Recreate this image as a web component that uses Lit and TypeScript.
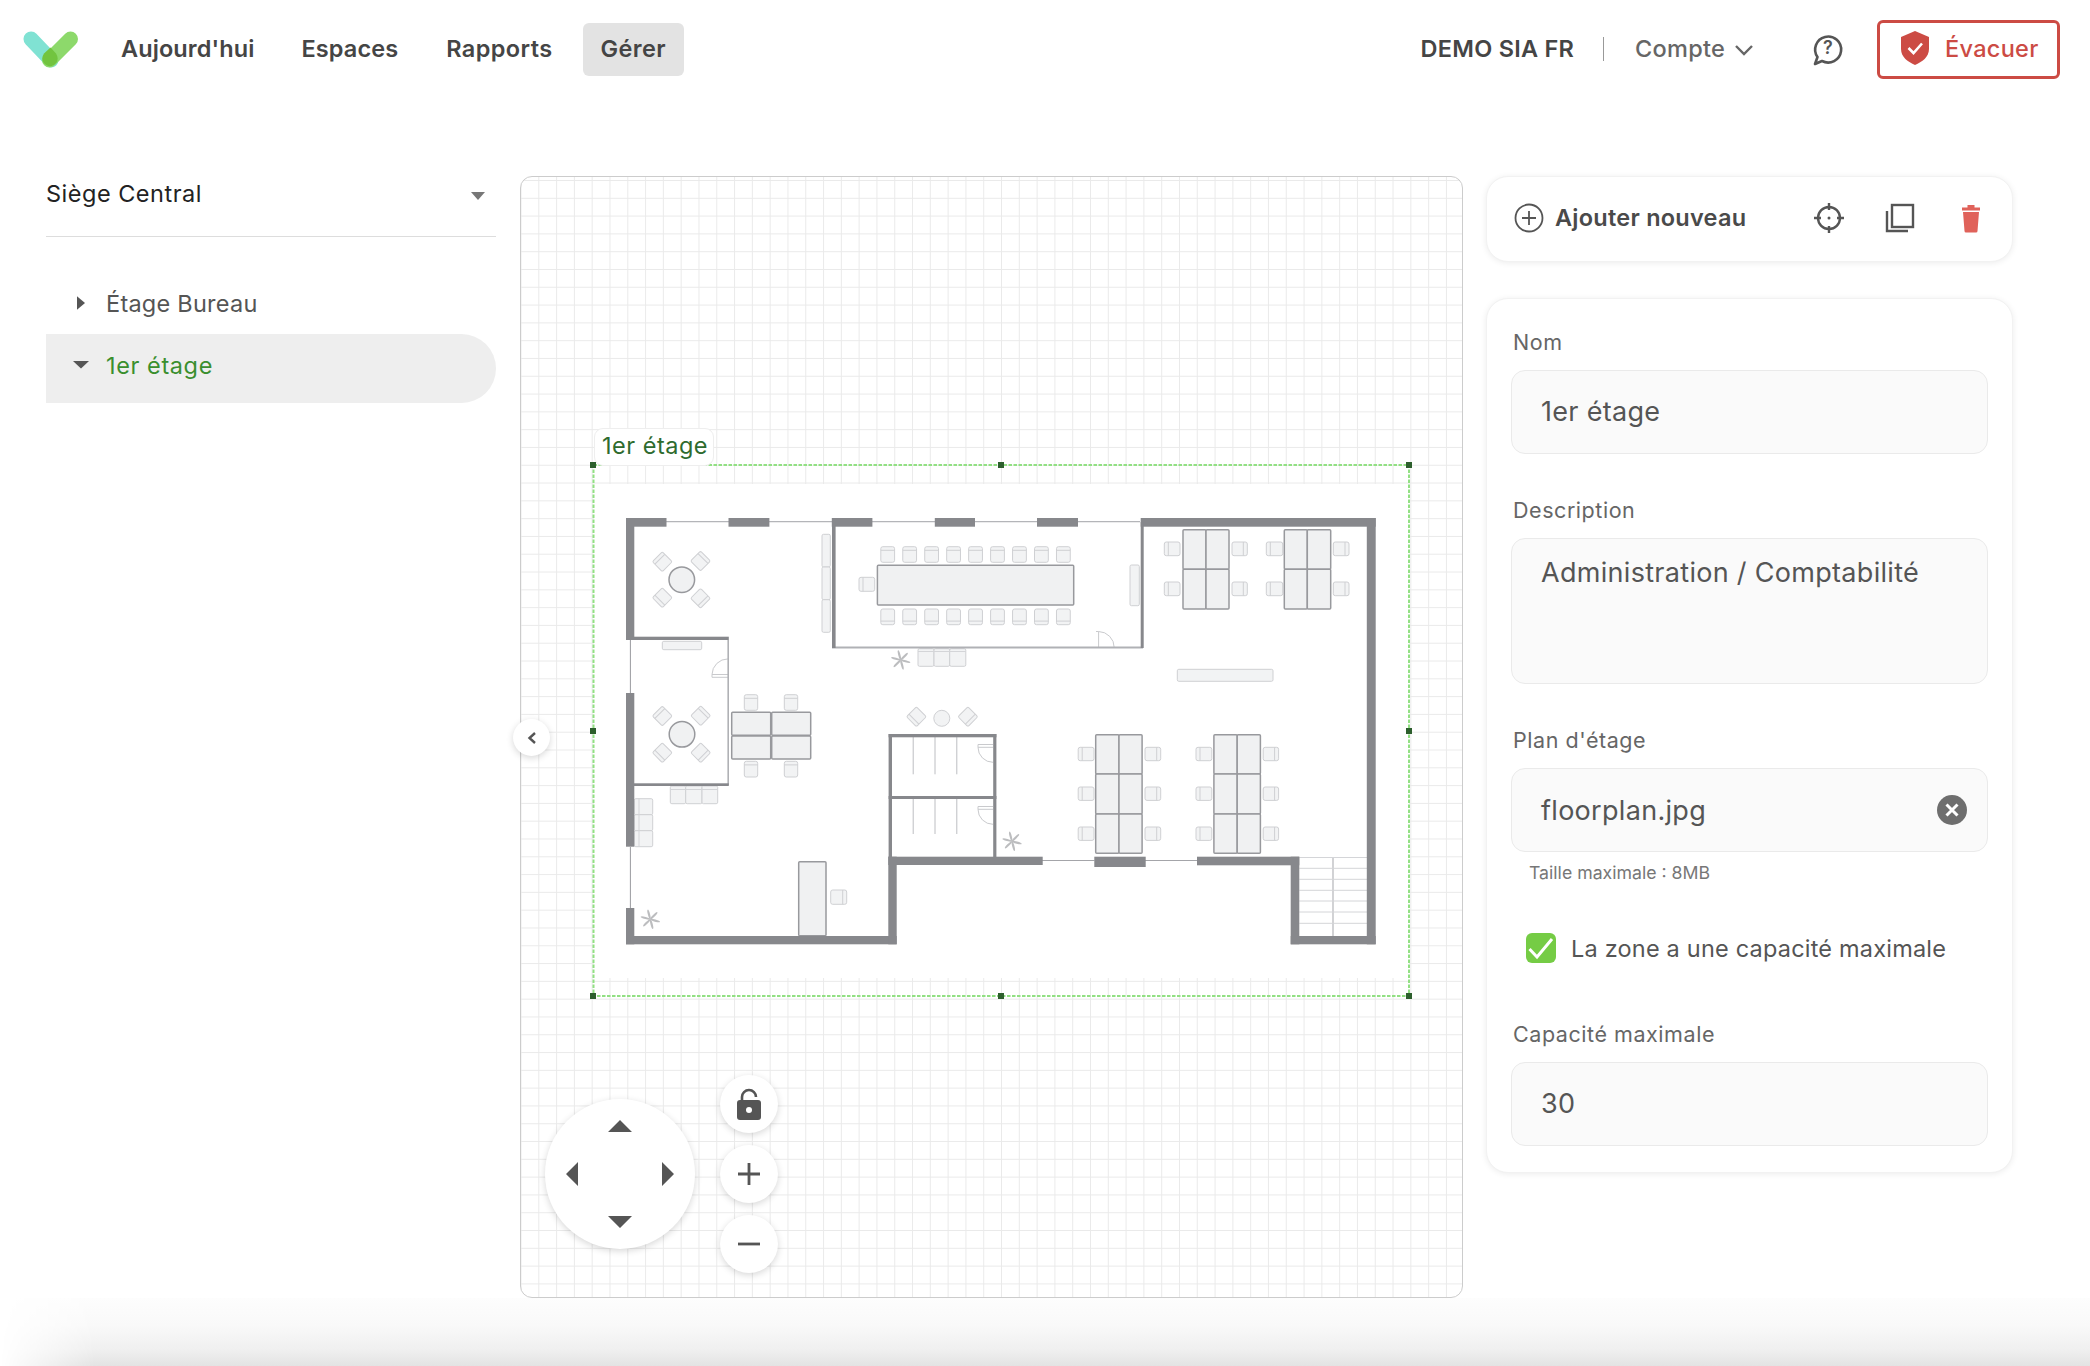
import { LitElement, html, svg, css } from "lit";
import { customElement } from "lit/decorators.js";

const WALL = "#87888c";

// wall rects given as x1, y1, x2, y2 in page pixels
const walls = [
  [626, 518, 666.5, 526.7], [728.5, 518, 769.4, 526.7], [831.8, 518, 872.4, 526.7],
  [934.8, 518, 975, 526.7], [1037, 518, 1078, 526.7], [1140.7, 518, 1375.7, 526.7],
  [1366.8, 518, 1375.7, 944.3], [626, 518, 634.3, 640], [626, 636.7, 728.8, 640],
  [832, 522, 835.6, 648], [1140.7, 522, 1143.7, 648], [626, 693, 634.3, 846.7],
  [634, 783.3, 728.8, 786], [626, 908, 634.3, 944.3], [626, 936, 896.7, 944.3],
  [888.3, 856.7, 896.7, 944.3], [888.3, 856.7, 1042.7, 865], [1094.3, 856.7, 1145.7, 867],
  [1197, 856.7, 1299.3, 865.3], [1290.7, 856.7, 1299.3, 944.3], [1290.7, 936, 1375.7, 944.3],
  [888.6, 734, 996.4, 737.3], [888.6, 734, 892, 857], [993.2, 734, 996.4, 857], [888.6, 796, 996.4, 799],
];

// thin lines: x1, y1, x2, y2, width, colour
const lines: [number, number, number, number, number, string][] = [
  [666, 521.7, 1140, 521.7, 1.3, "#b4b5b9"],
  [630.4, 640, 630.4, 693, 1, "#9a9b9f"],
  [630.4, 847, 630.4, 908, 1, "#9a9b9f"],
  [1042, 860.5, 1094.5, 860.5, 1, "#a4a5a9"],
  [1145, 860.5, 1197, 860.5, 1, "#a4a5a9"],
  [832, 647.6, 1143, 647.6, 2, "#b0b1b5"],
  [728.2, 640, 728.2, 785, 1.6, "#b0b1b5"],
  [913.2, 737, 913.2, 774.3, 1, "#bdbec2"], [935, 737, 935, 774.3, 1, "#bdbec2"], [956.8, 737, 956.8, 774.3, 1, "#bdbec2"],
  [913.2, 799, 913.2, 834, 1, "#bdbec2"], [935, 799, 935, 834, 1, "#bdbec2"], [956.8, 799, 956.8, 834, 1, "#bdbec2"],
  [1333, 857.5, 1333, 936, 1.2, "#b4b5b9"],
  ...[857.5, 868.3, 879.3, 890.3, 901, 912, 923.3].map(
    (y) => [1299.3, y, 1367, y, 1, "#d4d5d8"] as [number, number, number, number, number, string]
  ),
  // sofa backs
  [918, 651.5, 965.8, 651.5, 1, "#d4d5d8"],
  [670.3, 789.5, 717.7, 789.5, 1, "#d4d5d8"],
  [639, 798.7, 639, 846.7, 1, "#d4d5d8"],
];

// tables: x, y, w, h
const tables = [
  [877.4, 565.3, 196.3, 39.7], [731.7, 712.3, 39, 23], [771.7, 712.3, 39, 23], [731.7, 736, 39, 23], [771.7, 736, 39, 23],
  [1183, 529.7, 23, 39.6], [1206, 529.7, 23, 39.6], [1183, 569.3, 23, 39.7], [1206, 569.3, 23, 39.7],
  [1284.3, 529.7, 23, 39.6], [1307.3, 529.7, 23.4, 39.6], [1284.3, 569.3, 23, 39.7], [1307.3, 569.3, 23.4, 39.7],
  [1095.7, 734.7, 23.3, 39.3], [1119, 734.7, 23.1, 39.3], [1095.7, 774, 23.3, 40], [1119, 774, 23.1, 40], [1095.7, 814, 23.3, 39.3], [1119, 814, 23.1, 39.3],
  [1213.9, 734.7, 23.3, 39.3], [1237.2, 734.7, 23.2, 39.3], [1213.9, 774, 23.3, 40], [1237.2, 774, 23.2, 40], [1213.9, 814, 23.3, 39.3], [1237.2, 814, 23.2, 39.3],
  [798.7, 861.7, 27.3, 74],
];

// light furniture: x, y, w, h
const benches = [
  [1130, 565, 9.3, 40.7], [822, 534.3, 8.3, 32.7], [822, 567, 8.3, 32.7], [822, 599.7, 8.3, 32.6],
  [662.3, 641.3, 39.4, 8.4], [1177.3, 669.3, 95.7, 12],
  [918, 648.7, 16, 17.6], [934, 648.7, 15.7, 17.6], [949.7, 648.7, 16.1, 17.6],
  [670.3, 786, 15.4, 17.7], [685.7, 786, 16.3, 17.7], [702, 786, 15.7, 17.7],
  [634.3, 798.7, 18.4, 16], [634.3, 814.7, 18.4, 16], [634.3, 830.7, 18.4, 16],
];

type Side = "t" | "b" | "l" | "r";
const chairs: [number, number, number, number, Side][] = [];
for (let i = 0; i < 9; i++) {
  const x = 880.8 + i * 21.96;
  chairs.push([x, 546.7, 13.8, 15.6, "t"], [x, 609, 13.8, 15.7, "b"]);
}
chairs.push([859, 577.3, 15.7, 14, "l"], [830.7, 890, 16, 14.3, "r"]);
for (const x of [744.3, 784.3]) chairs.push([x, 694.7, 13.4, 15.6, "t"], [x, 761.3, 13.4, 15.7, "t"]);
for (const y of [542, 582]) {
  chairs.push([1164.3, y, 15.7, 13.7, "l"], [1232, y, 15.3, 13.7, "r"], [1266.3, y, 16.4, 13.7, "l"], [1333.3, y, 15.7, 13.7, "r"]);
}
for (const y of [747.3, 787, 827]) {
  chairs.push([1078.2, y, 15.8, 13.4, "l"], [1145, y, 15.7, 13.4, "r"], [1196, y, 15.8, 13.4, "l"], [1263.2, y, 15.4, 13.4, "r"]);
}

// diamond chairs: cx, cy, rotation of the back
const diamonds = [
  [662.3, 561.7, -135], [700.5, 561, -45], [662.3, 597.7, 135], [700.5, 598.3, 45],
  [662.3, 716, -135], [700.7, 715.7, -45], [662.3, 752.7, 135], [700.7, 752.7, 45],
  [916.4, 716.7, 135], [967.9, 716.7, 45],
];

const plants = [[900.7, 660], [650.3, 919.3], [1012, 841.3]];

const doors = [
  "M1096 631.5h2.6v16M1098.6 631.5a16 16 0 0 1 15.6 16",
  "M728 674.5h-16v2.8h16M712 674.5a16 16 0 0 1 16-15.6",
  "M993 744.5h-15v2.8h15M978 747.3a15 15 0 0 0 15 15",
  "M993 806.5h-15v2.8h15M978 809.3a15 15 0 0 0 15 15",
];

const handles = [
  [593, 465], [1001, 465], [1409, 465], [593, 731], [1409, 731], [593, 996], [1001, 996], [1409, 996],
];

function chairBand(x: number, y: number, w: number, h: number, side: Side) {
  if (side === "t") return svg`<line x1=${x} y1=${y + 3.6} x2=${x + w} y2=${y + 3.6} />`;
  if (side === "b") return svg`<line x1=${x} y1=${y + h - 3.6} x2=${x + w} y2=${y + h - 3.6} />`;
  if (side === "l") return svg`<line x1=${x + 4} y1=${y} x2=${x + 4} y2=${y + h} />`;
  return svg`<line x1=${x + w - 4} y1=${y} x2=${x + w - 4} y2=${y + h} />`;
}

function floorPlan() {
  return svg`
    <rect x="594" y="484" width="815" height="494" fill="#fff" />
    <g fill="#f2f3f4" stroke="#cfd0d3" stroke-width="1">
      ${benches.map(([x, y, w, h]) => svg`<rect x=${x} y=${y} width=${w} height=${h} rx="1.5" />`)}
      ${chairs.map(([x, y, w, h, s]) => svg`<rect x=${x} y=${y} width=${w} height=${h} rx="2" />${chairBand(x, y, w, h, s)}`)}
      ${diamonds.map(([cx, cy, r]) => svg`
        <g transform="translate(${cx} ${cy}) rotate(${r})">
          <rect x="-7" y="-7" width="14" height="14" rx="1.5" />
          <line x1="3.5" y1="-7" x2="3.5" y2="7" />
        </g>`)}
      <circle cx="941.8" cy="718.3" r="8" />
    </g>
    <g fill="#f0f1f2" stroke="#98999d" stroke-width="1.5">
      ${tables.map(([x, y, w, h]) => svg`<rect x=${x} y=${y} width=${w} height=${h} rx="1" />`)}
      <circle cx="681.8" cy="579.7" r="12.8" />
      <circle cx="682" cy="734.3" r="12.8" />
    </g>
    <g fill="none" stroke="#c9cacd" stroke-width="1">
      ${doors.map((d) => svg`<path d=${d} />`)}
    </g>
    ${lines.map(([x1, y1, x2, y2, w, c]) => svg`<line x1=${x1} y1=${y1} x2=${x2} y2=${y2} stroke=${c} stroke-width=${w} />`)}
    <g fill=${WALL}>
      ${walls.map(([a, b, c, d]) => svg`<rect x=${a} y=${b} width=${c - a} height=${d - b} />`)}
    </g>
    <g fill="#bcbdbf">
      ${plants.map(([cx, cy]) => svg`
        <g transform="translate(${cx} ${cy})">
          ${[15, 75, 135, 195, 255, 315].map((a) => svg`<ellipse cx="5" cy="0" rx="5" ry="1.1" transform="rotate(${a})" />`)}
        </g>`)}
    </g>
    <rect x="593.5" y="465" width="815.5" height="531" fill="none" stroke="#92e083" stroke-width="2" stroke-dasharray="3.5 1.5" />
    <g fill="#2d5f2d">
      ${handles.map(([x, y]) => svg`<rect x=${x - 3} y=${y - 3} width="6" height="6" />`)}
    </g>
  `;
}

@customElement("app-root")
export class AppRoot extends LitElement {
  static styles = css`
    :host {
      display: block;
      height: 1366px;
      overflow: hidden;
      background: #fff;
      font-family: Inter, "Noto Sans", sans-serif;
      color: #555;
    }
    svg { display: block; }

    .top {
      display: flex;
      align-items: center;
      height: 98px;
      padding: 0 30px 0 23px;
    }
    .logo { width: 56px; height: 38px; margin-right: 24px; }
    .nav { display: flex; gap: 11px; }
    .nav a {
      display: flex;
      align-items: center;
      box-sizing: border-box;
      height: 53px;
      padding: 0 18px 2px;
      border-radius: 6px;
      font-size: 23.5px;
      font-weight: 600;
      letter-spacing: .1px;
      color: #454545;
    }
    .nav a:nth-child(n + 3) { margin-left: 1px; letter-spacing: .4px; }
    .nav a.on { margin-left: 1px; background: #e3e3e3; }
    .right { display: flex; align-items: center; margin-left: auto; }
    .org { margin-bottom: 2px; font-size: 23.5px; font-weight: 600; letter-spacing: .25px; color: #454545; }
    .sep { width: 1px; height: 24px; background: #999; margin: 0 31px 0 29px; }
    .account { margin-bottom: 2px; font-size: 23.5px; font-weight: 500; letter-spacing: .25px; color: #666; }
    .chev { width: 20px; height: 13px; margin: 2px 0 0 9px; }
    .help { width: 32px; height: 34px; margin: 0 33px 0 58px; }
    .evac {
      display: flex;
      align-items: center;
      box-sizing: border-box;
      width: 183px;
      height: 59px;
      padding: 0 0 2px 21px;
      border: 3px solid #cc4b44;
      border-radius: 6px;
      font-size: 23.5px;
      font-weight: 500;
      letter-spacing: .3px;
      color: #cc4b44;
    }
    .shield { width: 28px; height: 34px; margin-right: 16px; }

    .main {
      display: grid;
      grid-template-columns: 451px 943px 527px;
      gap: 23px;
      height: 1122px;
      margin-top: 78px;
      padding-left: 46px;
    }
    .tree-side { width: 450px; }

    .site {
      display: flex;
      justify-content: space-between;
      box-sizing: border-box;
      height: 61px;
      padding: 1px 11px 0 0;
      border-bottom: 1px solid #ddd;
      font-size: 23.5px;
      letter-spacing: .5px;
      line-height: 34px;
      color: #222;
    }
    .site i { margin-top: 15px; border: 7.5px solid transparent; border-top: 8px solid #777; border-bottom: 0; height: 0; }
    .tree { margin-top: 35px; }
    .row {
      display: flex;
      align-items: center;
      height: 62px;
      font-size: 23.5px;
      letter-spacing: .25px;
      color: #555;
    }
    .row.sel {
      height: 69px;
      padding-bottom: 7px;
      box-sizing: border-box;
      background: #eee;
      border-radius: 0 35px 35px 0;
      letter-spacing: .6px;
      color: #3a8f2e;
    }
    .caret { display: flex; justify-content: center; box-sizing: border-box; width: 60px; padding-left: 10px; flex: none; }
    .caret svg { width: 16px; height: 16px; }

    .canvas {
      position: relative;
      box-sizing: border-box;
      border: 1px solid #ccc;
      border-radius: 12px;
      background-color: #fff;
      background-image:
        linear-gradient(to right, #eaeaea 1px, transparent 1px),
        linear-gradient(to bottom, #eaeaea 1px, transparent 1px);
      background-size: 17.8px 17.8px;
      background-position: -0.5px 3px;
    }
    .plan { position: absolute; left: -1px; top: -1px; width: 943px; height: 1122px; }
    .tag {
      position: absolute;
      left: 73px;
      top: 251px;
      box-sizing: border-box;
      width: 120px;
      height: 38px;
      padding-left: 7px;
      border-radius: 9px;
      border: 1px solid #eee;
      background: #fff;
      font-size: 23.5px;
      letter-spacing: .5px;
      line-height: 34px;
      color: #2e6b2e;
    }
    .round {
      position: absolute;
      display: flex;
      align-items: center;
      justify-content: center;
      border-radius: 50%;
      background: #fff;
      box-shadow: 0 2px 7px rgba(0, 0, 0, .16);
      color: #555;
    }
    .fold { left: -8px; top: 542px; width: 37px; height: 37px; }
    .fold svg { width: 12px; height: 14px; }
    .pad { left: 24px; top: 922px; width: 150px; height: 150px; }
    .pad svg { width: 150px; height: 150px; }
    .tool { left: 199px; width: 58px; height: 58px; }
    .tool svg { width: 30px; height: 32px; }
    .lock { top: 898px; }
    .plus { top: 968px; }
    .minus { top: 1038px; }

    .card {
      box-sizing: border-box;
      border-radius: 22px;
      background: #fff;
      border: 1px solid #f2f2f2;
      box-shadow: 0 1px 6px rgba(0, 0, 0, .08);
    }
    .side { display: flex; flex-direction: column; gap: 36px; }
    .actions {
      display: flex;
      align-items: center;
      box-sizing: border-box;
      height: 86px;
      padding: 0 0 3px 27px;
    }
    .actions .add { flex: none; width: 30px; height: 30px; margin-right: 11px; }
    .actions span { flex: none; width: 258px; font-size: 23.5px; font-weight: 600; letter-spacing: .25px; color: #4a4a4a; }
    .actions .btn { flex: none; width: 32px; height: 32px; }
    .actions .btn + .btn { margin-left: 39px; }
    .form { padding: 29px 24px 26px; }
    .field label { display: block; height: 28px; padding-left: 2px; margin-bottom: 14px; font-size: 21.5px; letter-spacing: .55px; line-height: 28px; color: #666; }
    .field + .field { margin-top: 42px; }
    .input {
      position: relative;
      box-sizing: border-box;
      height: 84px;
      padding-left: 29px;
      border: 1px solid #eaeaea;
      border-radius: 14px;
      background: #fafafa;
      font-size: 27px;
      letter-spacing: .3px;
      line-height: 82px;
      color: #555;
    }
    .input.area { height: 146px; line-height: 68px; }
    .input.file { line-height: 83px; }
    .clear { position: absolute; right: 20px; top: 26px; width: 30px; height: 30px; }
    .hint { height: 22px; margin-top: 10px; padding-left: 18px; font-size: 17.7px; line-height: 22px; color: #777; }
    .check { display: flex; align-items: center; height: 30px; margin: 49px 0 57px 15px; font-size: 23.5px; letter-spacing: .2px; color: #555; }
    .box { width: 30px; height: 30px; margin-right: 15px; }

    .shade {
      height: 68px;
      background: linear-gradient(to bottom, #fdfdfd 0%, #f9f9f9 40%, #f0f0f0 75%, #e3e3e3 100%);
      -webkit-mask-image: linear-gradient(to right, transparent 0, #000 95px);
      mask-image: linear-gradient(to right, transparent 0, #000 95px);
    }
  `;

  render() {
    return html`
      <header class="top">
        <svg class="logo" viewBox="23 30 56 38">
          <line x1="31" y1="39" x2="51" y2="60" stroke="#80e2d3" stroke-width="15" stroke-linecap="round" />
          <line x1="70.5" y1="39" x2="49.5" y2="60" stroke="#8dd96b" stroke-width="15" stroke-linecap="round" />
          <path d="M50.5 47.5L56 53.5Q59 58 56.5 62.5Q50 70 43.5 62.5Q41 58 44 53.5Z" fill="#72c43f" />
        </svg>
        <nav class="nav">
          <a>Aujourd'hui</a><a>Espaces</a><a>Rapports</a><a class="on">Gérer</a>
        </nav>
        <div class="right">
          <span class="org">DEMO SIA FR</span>
          <i class="sep"></i>
          <span class="account">Compte</span>
          <svg class="chev" viewBox="0 0 20 13"><path d="M2 2l8 8 8-8" fill="none" stroke="#666" stroke-width="2.4" /></svg>
          <svg class="help" viewBox="0 0 32 34">
            <path d="M5.5 25A13 13 0 1 1 10 29L3 32Z" fill="none" stroke="#555" stroke-width="2.6" stroke-linejoin="round" />
            <text x="16" y="22" text-anchor="middle" font-size="18" font-weight="600" fill="#555">?</text>
          </svg>
          <div class="evac">
            <svg class="shield" viewBox="0 0 28 34">
              <path d="M14 0L28 6V18C28 26 21 31 14 34C7 31 0 26 0 18V6Z" fill="#cc4b44" />
              <path d="M7.5 17l5 5 8.5-9.5" fill="none" stroke="#fff" stroke-width="2.6" />
            </svg>
            Évacuer
          </div>
        </div>
      </header>

      <main class="main">
        <aside class="tree-side">
          <div class="site">Siège Central<i></i></div>
          <div class="tree">
            <div class="row">
              <span class="caret"><svg viewBox="0 0 14 14"><path d="M3.5 1l7 6-7 6z" fill="#555" /></svg></span>
              Étage Bureau
            </div>
            <div class="row sel">
              <span class="caret"><svg viewBox="0 0 14 14"><path d="M0 3.5h14l-7 6.5z" fill="#555" /></svg></span>
              1er étage
            </div>
          </div>
        </aside>

        <section class="canvas">
          <svg class="plan" viewBox="520 176 943 1122">${floorPlan()}</svg>
          <div class="tag">1er étage</div>
          <div class="round fold">
            <svg viewBox="0 0 12 14"><path d="M9 2L3.5 7 9 12" fill="none" stroke="#555" stroke-width="2.4" /></svg>
          </div>
          <div class="round pad">
            <svg viewBox="0 0 150 150" fill="#555">
              <path d="M75 21l12 12H63zM75 129l12-12H63zM21 75l12-12v24zM129 75l-12-12v24z" />
            </svg>
          </div>
          <div class="round tool lock">
            <svg viewBox="0 0 30 32">
              <path d="M8 13V9a7 7 0 0 1 14 0" fill="none" stroke="#555" stroke-width="2.6" />
              <rect x="3" y="12" width="24" height="20" rx="3" fill="#555" />
              <circle cx="15" cy="22" r="3" fill="#fff" />
            </svg>
          </div>
          <div class="round tool plus">
            <svg viewBox="0 0 30 32"><path d="M15 5v22M4 16h22" fill="none" stroke="#555" stroke-width="2.8" /></svg>
          </div>
          <div class="round tool minus">
            <svg viewBox="0 0 30 32"><path d="M4 16h22" fill="none" stroke="#555" stroke-width="2.8" /></svg>
          </div>
        </section>

        <aside class="side">
          <div class="card actions">
            <svg class="add" viewBox="0 0 30 30" fill="none" stroke="#555" stroke-width="1.8">
              <circle cx="15" cy="15" r="13.5" /><path d="M15 8v14M8 15h14" />
            </svg>
            <span>Ajouter nouveau</span>
            <svg class="btn" viewBox="0 0 32 32" fill="none" stroke="#555" stroke-width="2.4">
              <circle cx="16" cy="16" r="11" /><path d="M16 1v7M16 24v7M1 16h7M24 16h7" />
              <circle cx="16" cy="16" r="1.5" fill="#555" stroke="none" />
            </svg>
            <svg class="btn" viewBox="0 0 32 32" fill="none" stroke="#555" stroke-width="2.4">
              <rect x="8" y="3" width="21" height="22" /><path d="M3 9v20h21" />
            </svg>
            <svg class="btn" viewBox="0 0 32 32" fill="#e0625a">
              <path d="M8 10h16l-1.5 19a1.5 1.5 0 0 1-1.5 1.5H11a1.5 1.5 0 0 1-1.5-1.5zM7 5.5h18V8.5H7zM12.5 3h7v3h-7z" />
            </svg>
          </div>

          <form class="card form">
            <div class="field"><label>Nom</label><div class="input">1er étage</div></div>
            <div class="field"><label>Description</label><div class="input area">Administration / Comptabilité</div></div>
            <div class="field">
              <label>Plan d'étage</label>
              <div class="input file">floorplan.jpg
                <svg class="clear" viewBox="0 0 30 30">
                  <circle cx="15" cy="15" r="15" fill="#6e6e6e" />
                  <path d="M9.5 9.5l11 11M20.5 9.5l-11 11" stroke="#fff" stroke-width="3" />
                </svg>
              </div>
              <div class="hint">Taille maximale : 8MB</div>
            </div>
            <div class="check">
              <svg class="box" viewBox="0 0 30 30">
                <rect width="30" height="30" rx="6" fill="#75cc45" />
                <path d="M3.5 16l7.5 8L26 6" fill="none" stroke="#fff" stroke-width="3" />
              </svg>
              La zone a une capacité maximale
            </div>
            <div class="field"><label>Capacité maximale</label><div class="input">30</div></div>
          </form>
        </aside>
      </main>
      <div class="shade"></div>
    `;
  }
}
